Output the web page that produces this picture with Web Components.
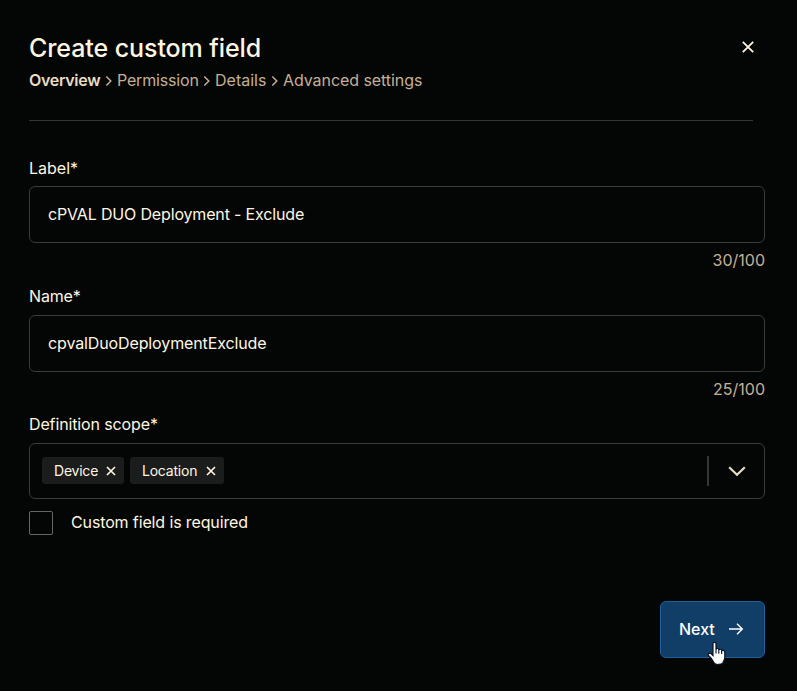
<!DOCTYPE html>
<html lang="en">
<head>
<meta charset="utf-8">
<title>Create custom field</title>
<style>
  html { background: #040606; }
  body { margin: 0; font-family: Inter, "Liberation Sans", sans-serif; font-size: 16px; color: #fff6e2; }
</style>
</head>
<body>
<custom-field-dialog></custom-field-dialog>
<script>
const define = (name, html) => {
  const t = document.createElement('template');
  t.innerHTML = html;
  customElements.define(name, class extends HTMLElement {
    constructor() {
      super();
      this.attachShadow({ mode: 'open' }).append(t.content.cloneNode(true));
    }
  });
};

define('step-trail', `
<style>
  :host { display: flex; align-items: center; height: 20px; line-height: 20px; color: #c5b095; }
  b { font-weight: 600; color: #ebdcc2; letter-spacing: -0.3px; width: 71px; white-space: nowrap; }
  span { white-space: nowrap; }
  svg { width: 17px; height: 20px; flex: none; fill: none; stroke: #c5b095; stroke-width: 1.5; }
</style>
<b>Overview</b>
<svg viewBox="0 0 17 20"><path d="M6.3 6.5 10.8 11 6.3 15.5"/></svg>
<span style="width:81px;letter-spacing:-.17px">Permission</span>
<svg viewBox="0 0 17 20"><path d="M6.3 6.5 10.8 11 6.3 15.5"/></svg>
<span style="width:51px">Details</span>
<svg viewBox="0 0 17 20"><path d="M6.3 6.5 10.8 11 6.3 15.5"/></svg>
<span style="letter-spacing:-.07px">Advanced settings</span>`);

define('dialog-header', `
<style>
  :host { display: flex; justify-content: space-between; height: 86px; width: 724px; padding-top: 34px; border-bottom: 1px solid #363636; }
  h1 { margin: 0 0 8px; font-size: 25px; line-height: 28px; font-weight: 500; letter-spacing: -.08px; white-space: nowrap; }
  .close { width: 12px; height: 12px; margin: 7px -1px 0 0; fill: none; stroke: #fff6e2; stroke-width: 1.8; }
</style>
<div><h1><slot></slot></h1><step-trail></step-trail></div>
<svg class="close" viewBox="0 0 12 12"><path d="M.8.8 11.2 11.2M11.2.8.8 11.2"/></svg>`);

define('text-field', `
<style>
  :host { display: block; }
  .label { line-height: 20px; margin-bottom: var(--label-gap, 8px); }
  .box { box-sizing: border-box; height: 57px; padding: 0 18px 2px; border: 1px solid #3a3a3a; border-radius: 6px; display: flex; align-items: center; letter-spacing: var(--value-spacing, 0); }
  .count { height: 20px; line-height: 20px; margin-top: 7px; text-align: right; color: #c5b095; }
</style>
<div class="label"><slot name="label"></slot></div>
<div class="box"><slot></slot></div>
<div class="count"><slot name="count"></slot></div>`);

define('scope-tag', `
<style>
  :host { box-sizing: border-box; display: flex; align-items: center; justify-content: space-between; height: 27px; margin-bottom: 1px; padding: 0 8px 0 12px; border-radius: 3px; background: #1b1c1c; font-size: 14px; letter-spacing: -.22px; }
  svg { width: 10px; height: 10px; fill: none; stroke: #fff6e2; stroke-width: 1.7; }
</style>
<span><slot></slot></span>
<svg viewBox="0 0 10 10"><path d="M1 1 9 9M9 1 1 9"/></svg>`);

define('scope-select', `
<style>
  :host { display: block; }
  .label { line-height: 20px; margin-bottom: 9px; letter-spacing: -.13px; }
  .box { box-sizing: border-box; height: 56px; padding: 0 18px 0 12px; border: 1px solid #3a3a3a; border-radius: 6px; display: flex; align-items: center; gap: 6px; }
  .bar { width: 2px; height: 30px; margin-left: auto; background: #363636; }
  .chevron { width: 18px; height: 12px; margin-left: 13px; fill: none; stroke: #ebdcc2; stroke-width: 2.2; }
</style>
<div class="label"><slot name="label"></slot></div>
<div class="box"><slot></slot><span class="bar"></span>
<svg class="chevron" viewBox="0 0 18 12"><path d="M1.2 2.3 9 9.8 16.8 2.3"/></svg></div>`);

define('check-option', `
<style>
  :host { display: flex; align-items: center; gap: 18px; height: 24px; letter-spacing: -.13px; }
  i { box-sizing: border-box; width: 24px; height: 24px; border: 1px solid #666764; border-radius: 2px; }
  span { padding-bottom: 2px; }
</style>
<i></i><span><slot></slot></span>`);

define('next-button', `
<style>
  :host { position: relative; box-sizing: border-box; display: flex; align-items: center; justify-content: space-between; width: 105px; height: 57px; padding: 0 20px 2px 18px; border: 1px solid #1f5f9c; border-radius: 6px; background: #103e66; font-weight: 500; color: #fff; }
  .arrow { width: 16px; height: 14px; fill: none; stroke: #fff; stroke-width: 1.4; }
  .pointer { position: absolute; left: 46px; top: 39px; width: 20px; height: 25px; }
</style>
<span><slot></slot></span>
<svg class="arrow" viewBox="0 0 16 14"><path d="M1 7H14.2M9 1.7 14.3 7 9 12.3"/></svg>
<svg class="pointer" viewBox="0 0 20 25"><path d="M6 2.8C6 .8 9 .8 9 2.8V8.3C9.3 7 11.8 7.2 11.8 8.9 12.3 7.7 14.7 8 14.7 9.8 15.4 8.8 17.8 9.2 17.8 11V16.2C17.8 19 16.4 20 16 21.5 14.5 24 8.5 24 7.3 22.2 6.2 20.5 5.8 19.5 4.7 18L1.5 14.4C.4 12.6 2.8 11.4 4.2 12.8L6 14.5Z" fill="#fff" stroke="#0b1020" stroke-width="1.2"/><path d="M9 8V12.4M11.8 9V12.7M14.7 10V13" stroke="#0b1020" stroke-width="1.1"/></svg>`);

define('custom-field-dialog', `
<style>
  :host { box-sizing: border-box; display: flex; flex-direction: column; height: 691px; padding: 0 32px 0 29px; overflow: hidden; }
</style>
<dialog-header>Create custom field</dialog-header>
<text-field style="margin-top:37px;--value-spacing:-.16px"><span slot="label">Label*</span>cPVAL DUO Deployment - Exclude<span slot="count">30/100</span></text-field>
<text-field style="margin-top:16px;--label-gap:9px;--value-spacing:-.12px"><span slot="label" style="letter-spacing:-.15px">Name*</span>cpvalDuoDeploymentExclude<span slot="count">25/100</span></text-field>
<scope-select style="margin-top:15px"><span slot="label">Definition scope*</span><scope-tag style="width:82px">Device</scope-tag><scope-tag style="width:94px">Location</scope-tag></scope-select>
<check-option style="margin-top:12px">Custom field is required</check-option>
<next-button style="align-self:flex-end;margin-top:66px">Next</next-button>`);
</script>
</body>
</html>
